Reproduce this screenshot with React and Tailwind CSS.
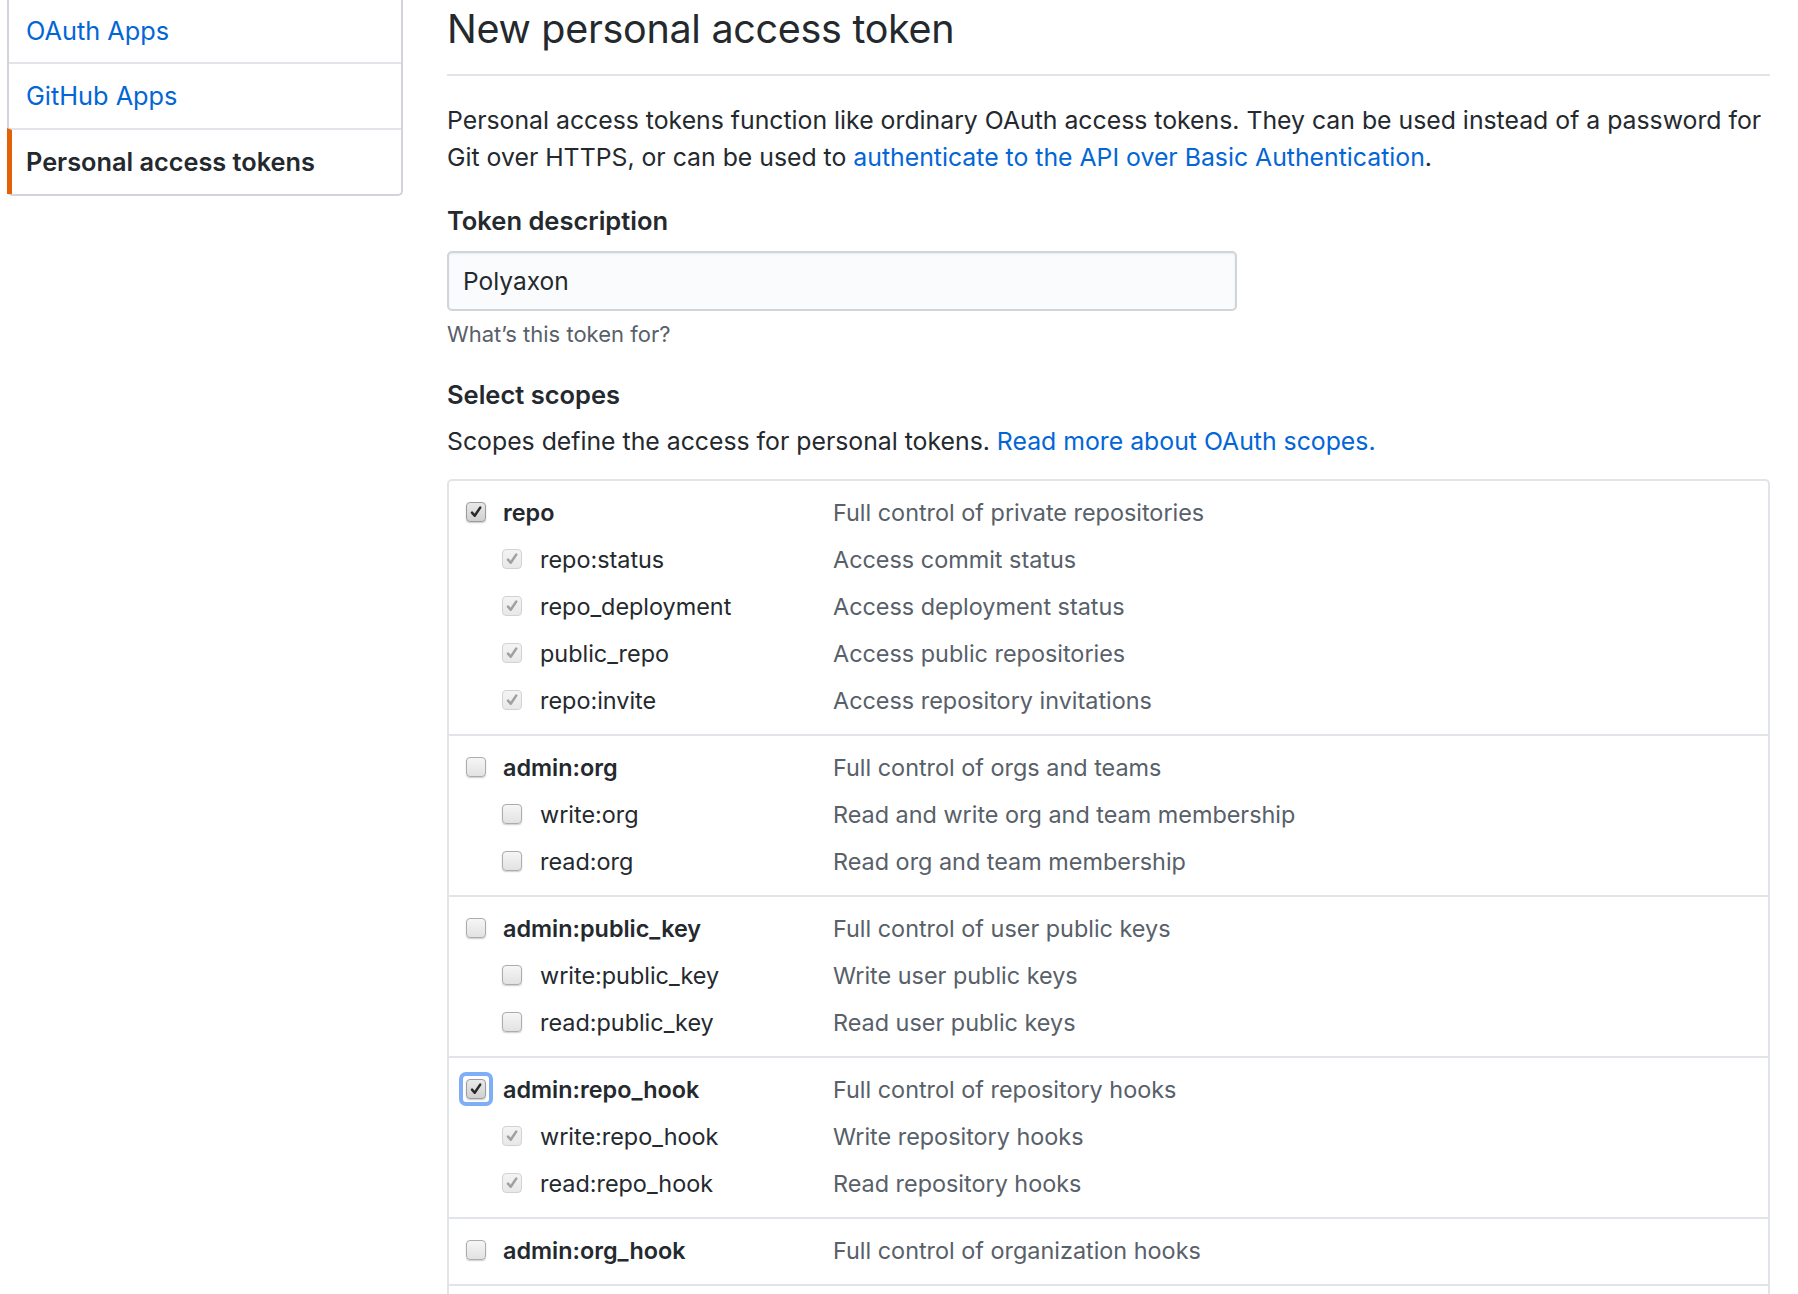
import React from "react";

const scopeGroups = [
  {
    name: "repo",
    desc: "Full control of private repositories",
    state: "checked",
    children: [
      ["repo:status", "Access commit status"],
      ["repo_deployment", "Access deployment status"],
      ["public_repo", "Access public repositories"],
      ["repo:invite", "Access repository invitations"],
    ],
  },
  {
    name: "admin:org",
    desc: "Full control of orgs and teams",
    state: "unchecked",
    children: [
      ["write:org", "Read and write org and team membership"],
      ["read:org", "Read org and team membership"],
    ],
  },
  {
    name: "admin:public_key",
    desc: "Full control of user public keys",
    state: "unchecked",
    children: [
      ["write:public_key", "Write user public keys"],
      ["read:public_key", "Read user public keys"],
    ],
  },
  {
    name: "admin:repo_hook",
    desc: "Full control of repository hooks",
    state: "checked",
    focus: true,
    children: [
      ["write:repo_hook", "Write repository hooks"],
      ["read:repo_hook", "Read repository hooks"],
    ],
  },
  {
    name: "admin:org_hook",
    desc: "Full control of organization hooks",
    state: "unchecked",
    children: [],
  },
];

const Checkbox = ({ state, focus }) => {
  let box =
    "border-[#acacac] bg-gradient-to-b from-[#f6f6f6] to-[#e2e2e2] shadow-[0_1px_1.5px_rgba(0,0,0,0.2)]";
  let check = null;
  if (state === "checked") {
    box =
      "border-[#9c9c9c] bg-gradient-to-b from-[#e9e9e9] to-[#d0d0d0] shadow-[0_1px_1.5px_rgba(0,0,0,0.22)]";
    check = "#2a2a2a";
  }
  if (state === "implied") {
    box = "border-[#d2d2d2] bg-gradient-to-b from-[#f4f4f4] to-[#e8e8e8]";
    check = "#a0a0a0";
  }
  const inner = (
    <div
      className={
        "w-[20px] h-[20px] rounded-[4px] border flex items-center justify-center shrink-0 " +
        box
      }
    >
      {check && (
        <svg width="14" height="14" viewBox="0 0 14 14">
          <path
            d="M3 7.6 L5.7 10.8 L11.2 2.6"
            fill="none"
            stroke={check}
            strokeWidth="2.5"
            strokeLinecap="round"
            strokeLinejoin="round"
          />
        </svg>
      )}
    </div>
  );
  if (focus) {
    return (
      <div className="-m-[7px] p-[3px] rounded-[7px] border-[4px] border-[#7eaef6] shrink-0">
        {inner}
      </div>
    );
  }
  return inner;
};

const ScopeRow = ({ name, desc, state, child, focus }) => (
  <div className="flex items-center h-[47px] text-[23.4px]">
    <div
      className={
        "w-[384px] shrink-0 flex items-center " +
        (child ? "pl-[53px] gap-[18px]" : "pl-[17px] gap-[17px]")
      }
    >
      <Checkbox state={state} focus={focus} />
      <span className={child ? "text-[#24292e]" : "font-semibold text-[#24292e]"}>
        {name}
      </span>
    </div>
    <div className="text-[#586069]">{desc}</div>
  </div>
);

const SideItem = ({ children, active, first }) => (
  <div
    className={
      "flex items-center text-[25.3px] " +
      (first ? "h-[62px] " : "h-[66px] border-t-2 border-[#e1e4e8] ") +
      (active
        ? "border-l-[5px] border-l-[#e36209] -ml-[2px] pl-[14px] font-semibold text-[#24292e]"
        : "pl-[17px] text-[#0366d6]")
    }
  >
    {children}
  </div>
);

export default function App() {
  return (
    <div
      className="w-[1798px] h-[1294px] overflow-hidden bg-white text-[24.8px] text-[#24292e]"
      style={{ fontFamily: "Inter, 'Liberation Sans', Arial, sans-serif" }}
    >
      <div className="flex pl-[7px] pr-[28px] gap-[44px]">
        <div className="w-[396px] shrink-0 self-start border-2 border-t-0 border-[#d1d5da] rounded-b-[5px]">
          <SideItem first>OAuth Apps</SideItem>
          <SideItem>GitHub Apps</SideItem>
          <SideItem active>Personal access tokens</SideItem>
        </div>

        <div className="flex-1 min-w-0">
          <div className="pt-[4px] pb-[19px] border-b-2 border-[#e1e4e8]">
            <h1 className="text-[39.5px] leading-[51px] font-normal tracking-[-0.3px]">
              New personal access token
            </h1>
          </div>

          <p className="mt-[26px] leading-[37px]">
            Personal access tokens function like ordinary OAuth access tokens. They can be used
            instead of a password for Git over HTTPS, or can be used to{" "}
            <a className="text-[#0366d6]">authenticate to the API over Basic Authentication</a>.
          </p>

          <div className="mt-[27px] text-[25.5px] font-semibold leading-[36px]">
            Token description
          </div>
          <div className="mt-[12px] w-[790px] h-[60px] border-2 border-[#d1d5da] rounded-[5px] bg-[#fafbfc] shadow-[inset_0_1px_2px_rgba(27,31,35,0.075)] flex items-center px-[14px] text-[24.5px]">
            Polyaxon
          </div>
          <div className="mt-[8px] text-[22px] leading-[31px] text-[#586069]">
            What’s this token for?
          </div>

          <div className="mt-[27px] text-[25.5px] font-semibold leading-[36px]">
            Select scopes
          </div>
          <div className="mt-[10px] leading-[36px]">
            Scopes define the access for personal tokens.{" "}
            <a className="text-[#0366d6]">Read more about OAuth scopes.</a>
          </div>

          <div className="mt-[20px] border-2 border-[#e1e4e8] rounded-t-[5px] border-b-0">
            {scopeGroups.map((g, i) => (
              <div
                key={g.name}
                className={"pt-[8px] pb-[10px] " + (i > 0 ? "border-t-2 border-[#e1e4e8]" : "")}
              >
                <ScopeRow name={g.name} desc={g.desc} state={g.state} focus={g.focus} />
                {g.children.map(([n, d]) => (
                  <ScopeRow
                    key={n}
                    name={n}
                    desc={d}
                    child
                    state={g.state === "checked" ? "implied" : "unchecked"}
                  />
                ))}
              </div>
            ))}
            <div className="border-t-2 border-[#e1e4e8] h-[60px]"></div>
          </div>
        </div>
      </div>
    </div>
  );
}
